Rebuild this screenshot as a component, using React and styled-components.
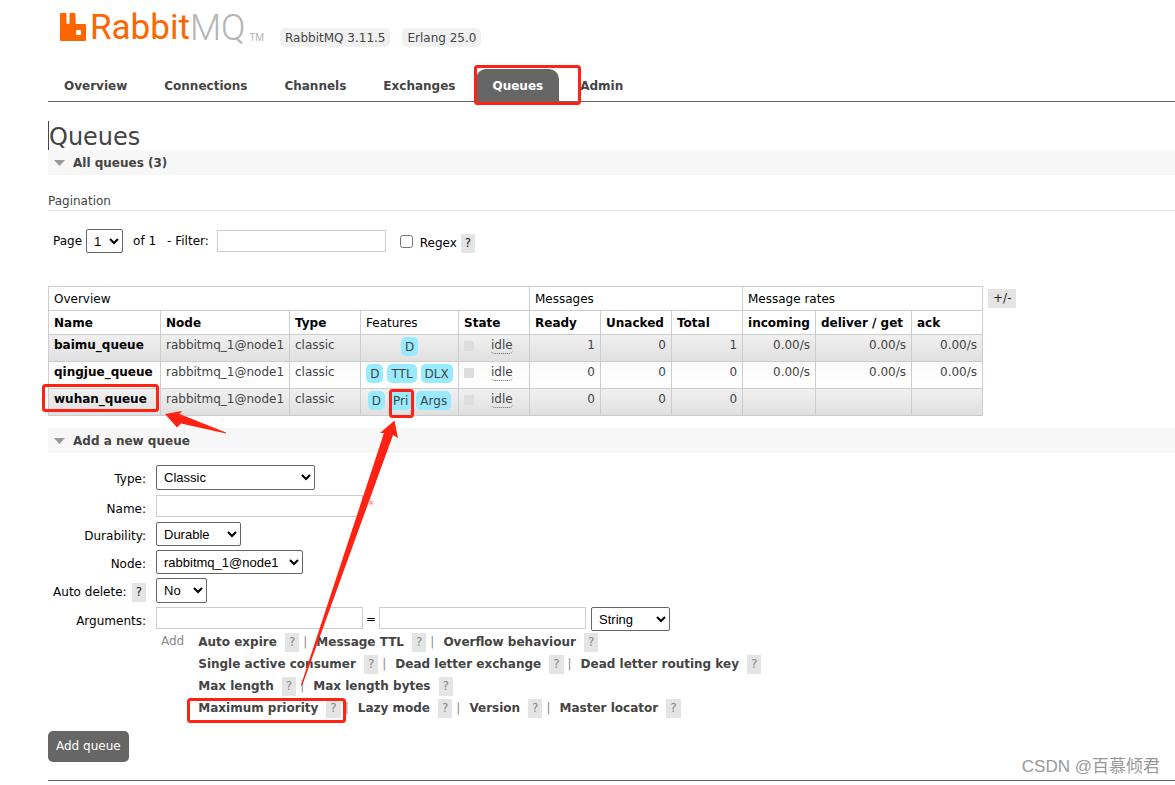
import React from "react";
import styled, { createGlobalStyle } from "styled-components";

const GlobalStyle = createGlobalStyle`
  * {
    box-sizing: border-box;
  }

  body {
    margin: 0;
    background: #fff;
    color: #444;
    font: 12px/17px Verdana, "DejaVu Sans", sans-serif;
  }
`;

const Page = styled.div`
  position: relative;
  padding-left: 48px;
  overflow: hidden;
`;

const Header = styled.header`
  display: flex;
  align-items: flex-end;
  height: 47px;
  padding-left: 12px;
`;

const Logo = styled.a`
  display: flex;
  align-items: flex-end;
  width: 208px;
  height: 38px;
  color: #f60;
  font: 35px/38px Roboto, sans-serif;
  text-decoration: none;

  svg {
    margin: 0 3px 6px 0;
  }
`;

const LogoLight = styled.span`
  color: #b4b4b4;
  font-size: 36px;
  font-weight: 300;
`;

const Trademark = styled.span`
  margin-left: 4px;
  color: #b4b4b4;
  font-size: 10px;
  line-height: 19px;
`;

const Versions = styled.div`
  display: flex;
  gap: 12px;
  margin-left: 12px;
`;

const Version = styled.span`
  padding: 2px 5px 0;
  border-radius: 5px;
  background: #f0f0f0;
`;

const Tabs = styled.nav`
  display: flex;
  gap: 5px;
  margin-top: 22px;
  border-bottom: 1px solid #666;
`;

const Tab = styled.a`
  padding: 9px 16px 6px;
  border-radius: 10px 10px 0 0;
  background: ${({ $active }) => ($active ? "#666" : "transparent")};
  color: ${({ $active }) => ($active ? "#fff" : "#444")};
  font-weight: bold;
  text-decoration: none;
`;

const Title = styled.h1`
  width: max-content;
  margin: 19px 0 0;
  padding-top: 3px;
  border-left: 1px solid #444;
  font-size: 24px;
  font-weight: normal;
  line-height: 26px;
`;

const SectionTitle = styled.h2`
  display: flex;
  align-items: center;
  gap: 8px;
  height: 25px;
  margin: 0;
  padding: 1px 0 0 6px;
  background: #f7f7f7;
  font-size: 12px;
`;

const SubTitle = styled.h3`
  margin: 17px 0 0;
  border-bottom: 1px solid #e4e4e4;
  font-size: 12px;
  font-weight: normal;
  line-height: 18px;
`;

const Filters = styled.div`
  display: flex;
  align-items: center;
  height: 24px;
  margin: 18px 0 33px;
  padding-left: 5px;
  color: #000;

  > button {
    margin-top: 4px;
  }
`;

const FilterLabel = styled.label`
  display: flex;
  align-items: center;
  gap: ${({ $gap }) => $gap || 4}px;
  margin-right: ${({ $after }) => $after || 0}px;
`;

const CheckText = styled.span`
  padding-top: 4px;
`;

const Select = styled.select`
  width: ${({ $width }) => $width}px;
  height: ${({ $tall }) => ($tall ? 25 : 24)}px;
  padding: 0 3px;
  border: 1px solid #666;
  border-radius: 2px;
  background-color: #fff;
  color: #000;
  font: 13px "Liberation Sans", Arial, sans-serif;
`;

const TextInput = styled.input`
  width: ${({ $width }) => $width}px;
  height: 22px;
  padding: 2px 4px;
  border: 1px solid #ccc;
  font: inherit;
`;

const Check = styled.input`
  width: 13px;
  height: 13px;
  margin: 0;
`;

const Help = styled.button`
  min-width: 14px;
  height: 19px;
  padding: 0 4px;
  border: 0;
  background: #e4e4e4;
  color: ${({ $muted }) => ($muted ? "#888" : "#222")};
  font: inherit;
  line-height: 19px;
`;

const TableArea = styled.div`
  display: flex;
  align-items: flex-start;
  gap: 5px;

  > button {
    margin-top: 3px;
    padding: 0 5px;
  }
`;

const Table = styled.table`
  table-layout: fixed;
  width: 935px;
  border-collapse: collapse;

  th,
  td {
    padding: 3px 5px;
    border: 1px solid #ccc;
    text-align: left;
    white-space: nowrap;
  }

  th {
    height: 24px;
    padding-top: 4px;
    padding-bottom: 2px;
    color: #000;
  }

  tbody td,
  tbody th {
    height: 27px;
    padding-top: 2px;
    padding-bottom: 0;
    vertical-align: top;
  }

  tbody tr {
    background: linear-gradient(#fafafa, #fff);
  }

  tbody tr:nth-child(odd) {
    background: linear-gradient(#f0f0f0, #dfdfdf);
  }
`;

const PlainHead = styled.th`
  font-weight: normal;
`;

const Count = styled.td`
  && {
    text-align: right;
  }
`;

const QueueLink = styled.a`
  color: #000;
  text-decoration: none;
`;

const Features = styled.div`
  display: flex;
  justify-content: center;
  gap: 4px;
`;

const Feature = styled.span`
  padding: 2px 4px 0;
  border-radius: 5px;
  background: #98ebff;
`;

const State = styled.div`
  display: flex;
  align-items: center;

  &::before {
    content: "";
    width: 10px;
    height: 10px;
    margin-right: 17px;
    background: #ddd;
  }
`;

const StateText = styled.abbr`
  border-bottom: 1px dotted #666;
  border-radius: 4px;
  line-height: 16px;
  text-decoration: none;
`;

const NewQueue = styled.section`
  margin-top: 12px;
`;

const Form = styled.form`
  padding-top: 12px;
`;

const Field = styled.div`
  display: grid;
  grid-template-columns: 98px auto;
  justify-content: start;
  column-gap: 10px;
  height: ${({ $height }) => $height || 28}px;
  color: #000;
`;

const FieldLabel = styled.div`
  display: flex;
  justify-content: flex-end;
  align-items: center;
  gap: 5px;
  height: 28px;
  white-space: nowrap;
`;

const Controls = styled.div`
  display: flex;
  align-items: flex-start;
  gap: 5px;
`;

const Required = styled.span`
  color: #f88;
  line-height: 20px;
`;

const Equals = styled.span`
  margin: 0 -2px;
  line-height: 24px;
`;

const Presets = styled.div`
  display: flex;
  gap: 14px;
  margin-left: 113px;
  color: #888;

  > span {
    padding-top: 2px;
  }
`;

const PresetRow = styled.div`
  display: flex;
  align-items: center;
  height: 22px;
  white-space: nowrap;
`;

const Preset = styled.span`
  display: flex;
  align-items: center;
  gap: 8px;

  & + &::before {
    content: "|";
    margin: 0 1px 0 4px;
  }
`;

const PresetLink = styled.a`
  color: #444;
  font-weight: bold;
  text-decoration: none;
`;

const Submit = styled.button`
  display: block;
  height: 31px;
  margin: 12px 0 18px;
  padding: 0 8px;
  border: 0;
  border-radius: 5px;
  background: #666;
  color: #fff;
  font: inherit;
`;

const Footer = styled.footer`
  height: 5px;
  border-top: 1px solid #666;
`;

const Marks = styled.svg`
  position: absolute;
  top: 0;
  left: 0;
  pointer-events: none;
`;

const Watermark = styled.div`
  position: absolute;
  right: 15px;
  bottom: 6px;
  color: #999;
  font: 17px/24px "Liberation Sans", "Noto Sans CJK SC", sans-serif;
`;

const tabs = ["Overview", "Connections", "Channels", "Exchanges", "Queues", "Admin"];

const columnWidths = [112, 129, 71, 98, 71, 71, 71, 71, 73, 96, 71];

const queues = [
  {
    name: "baimu_queue",
    features: ["D"],
    counts: [1, 0, 1],
    rates: ["0.00/s", "0.00/s", "0.00/s"],
  },
  {
    name: "qingjue_queue",
    features: ["D", "TTL", "DLX"],
    counts: [0, 0, 0],
    rates: ["0.00/s", "0.00/s", "0.00/s"],
  },
  {
    name: "wuhan_queue",
    features: ["D", "Pri", "Args"],
    counts: [0, 0, 0],
    rates: ["", "", ""],
  },
];

const presets = [
  ["Auto expire", "Message TTL", "Overflow behaviour"],
  ["Single active consumer", "Dead letter exchange", "Dead letter routing key"],
  ["Max length", "Max length bytes"],
  ["Maximum priority", "Lazy mode", "Version", "Master locator"],
];

const Arrow = () => (
  <svg width="11" height="6" viewBox="0 0 11 6" aria-hidden="true">
    <path d="M0 0h11L5.5 6z" fill="#999" />
  </svg>
);

const QueueTable = () => (
  <Table>
    <colgroup>
      {columnWidths.map((width, i) => (
        <col key={i} width={width} />
      ))}
    </colgroup>
    <thead>
      <tr>
        <PlainHead colSpan={5}>Overview</PlainHead>
        <PlainHead colSpan={3}>Messages</PlainHead>
        <PlainHead colSpan={3}>Message rates</PlainHead>
      </tr>
      <tr>
        <th>Name</th>
        <th>Node</th>
        <th>Type</th>
        <PlainHead>Features</PlainHead>
        <th>State</th>
        <th>Ready</th>
        <th>Unacked</th>
        <th>Total</th>
        <th>incoming</th>
        <th>deliver / get</th>
        <th>ack</th>
      </tr>
    </thead>
    <tbody>
      {queues.map((queue) => (
        <tr key={queue.name}>
          <th scope="row">
            <QueueLink href="#queue">{queue.name}</QueueLink>
          </th>
          <td>rabbitmq_1@node1</td>
          <td>classic</td>
          <td>
            <Features>
              {queue.features.map((feature) => (
                <Feature key={feature}>{feature}</Feature>
              ))}
            </Features>
          </td>
          <td>
            <State>
              <StateText>idle</StateText>
            </State>
          </td>
          {[...queue.counts, ...queue.rates].map((value, i) => (
            <Count key={i}>{value}</Count>
          ))}
        </tr>
      ))}
    </tbody>
  </Table>
);

const QueueForm = () => (
  <Form onSubmit={(e) => e.preventDefault()}>
    <Field $height={30}>
      <FieldLabel>
        <label htmlFor="type">Type:</label>
      </FieldLabel>
      <Controls>
        <Select id="type" $width={159} $tall>
          <option>Classic</option>
        </Select>
      </Controls>
    </Field>
    <Field $height={27}>
      <FieldLabel>
        <label htmlFor="name">Name:</label>
      </FieldLabel>
      <Controls>
        <TextInput id="name" $width={207} />
        <Required>*</Required>
      </Controls>
    </Field>
    <Field>
      <FieldLabel>
        <label htmlFor="durability">Durability:</label>
      </FieldLabel>
      <Controls>
        <Select id="durability" $width={85}>
          <option>Durable</option>
        </Select>
      </Controls>
    </Field>
    <Field>
      <FieldLabel>
        <label htmlFor="node">Node:</label>
      </FieldLabel>
      <Controls>
        <Select id="node" $width={147}>
          <option>rabbitmq_1@node1</option>
        </Select>
      </Controls>
    </Field>
    <Field $height={29}>
      <FieldLabel>
        <label htmlFor="autodelete">Auto delete:</label>
        <Help type="button">?</Help>
      </FieldLabel>
      <Controls>
        <Select id="autodelete" $width={51} $tall>
          <option>No</option>
        </Select>
      </Controls>
    </Field>
    <Field $height={24}>
      <FieldLabel>
        <label htmlFor="argument">Arguments:</label>
      </FieldLabel>
      <Controls>
        <TextInput id="argument" $width={207} />
        <Equals>=</Equals>
        <TextInput aria-label="Argument value" $width={207} />
        <Select aria-label="Argument type" $width={79}>
          <option>String</option>
        </Select>
      </Controls>
    </Field>
    <Presets>
      <span>Add</span>
      <div>
        {presets.map((row) => (
          <PresetRow key={row[0]}>
            {row.map((preset) => (
              <Preset key={preset}>
                <PresetLink href="#argument">{preset}</PresetLink>
                <Help type="button" $muted>
                  ?
                </Help>
              </Preset>
            ))}
          </PresetRow>
        ))}
      </div>
    </Presets>
    <Submit type="submit">Add queue</Submit>
  </Form>
);

// Red boxes and arrows drawn over the page
const Annotations = () => (
  <Marks width="700" height="780" viewBox="0 0 700 780" aria-hidden="true">
    <g fill="none" stroke="#ff2213" strokeWidth="3">
      <rect x="475.5" y="66.5" width="104" height="37" rx="2" />
      <rect x="43.5" y="385.5" width="114" height="25" rx="2" />
      <rect x="390.5" y="390.5" width="22" height="26" rx="2" />
      <rect x="188.5" y="699.5" width="156" height="22" rx="2" />
    </g>
    <g fill="#ff2213">
      <path d="M165 414l17-3-2.500 3L226 432.500v1L181 423.500l-4 4z" />
      <path d="M394.500 420.500l3.500 17.500-5-3L302 686l-1-1 83-252-4 0z" />
    </g>
  </Marks>
);

const App = () => {
  return (
    <Page>
      <GlobalStyle />
      <Header>
        <Logo href="#home">
          <svg width="27" height="28" viewBox="0 0 27 28" aria-hidden="true">
            <path
              fill="#f60"
              fillRule="evenodd"
              d="M1 0h4.500q1 0 1 1v9q0 1 1 1h1q1 0 1-1V1q0-1 1-1h4q1 0 1 1v9q0 1 1 1h8.500q1 0 1 1v15q0 1-1 1H1q-1 0-1-1V1q0-1 1-1zM17 17q-1 0-1 1v3q0 1 1 1h3q1 0 1-1v-3q0-1-1-1z"
            />
          </svg>
          Rabbit<LogoLight>MQ</LogoLight>
          <Trademark>TM</Trademark>
        </Logo>
        <Versions>
          <Version>RabbitMQ 3.11.5</Version>
          <Version>Erlang 25.0</Version>
        </Versions>
      </Header>
      <Tabs>
        {tabs.map((tab) => (
          <Tab key={tab} href="#tab" $active={tab === "Queues"}>
            {tab}
          </Tab>
        ))}
      </Tabs>
      <main>
        <Title>Queues</Title>
        <SectionTitle>
          <Arrow />
          All queues (3)
        </SectionTitle>
        <SubTitle>Pagination</SubTitle>
        <Filters>
          <FilterLabel $after={10}>
            Page
            <Select $width={37}>
              <option>1</option>
            </Select>
          </FilterLabel>
          <FilterLabel as="span" $after={11}>
            of 1
          </FilterLabel>
          <FilterLabel $gap={8} $after={14}>
            - Filter:
            <TextInput $width={169} />
          </FilterLabel>
          <FilterLabel $gap={7} $after={4}>
            <Check type="checkbox" />
            <CheckText>Regex</CheckText>
          </FilterLabel>
          <Help type="button">?</Help>
        </Filters>
        <TableArea>
          <QueueTable />
          <Help type="button">+/-</Help>
        </TableArea>
        <NewQueue>
          <SectionTitle>
            <Arrow />
            Add a new queue
          </SectionTitle>
          <QueueForm />
        </NewQueue>
      </main>
      <Footer />
      <Annotations />
      <Watermark>CSDN @百慕倾君</Watermark>
    </Page>
  );
};

export default App;
